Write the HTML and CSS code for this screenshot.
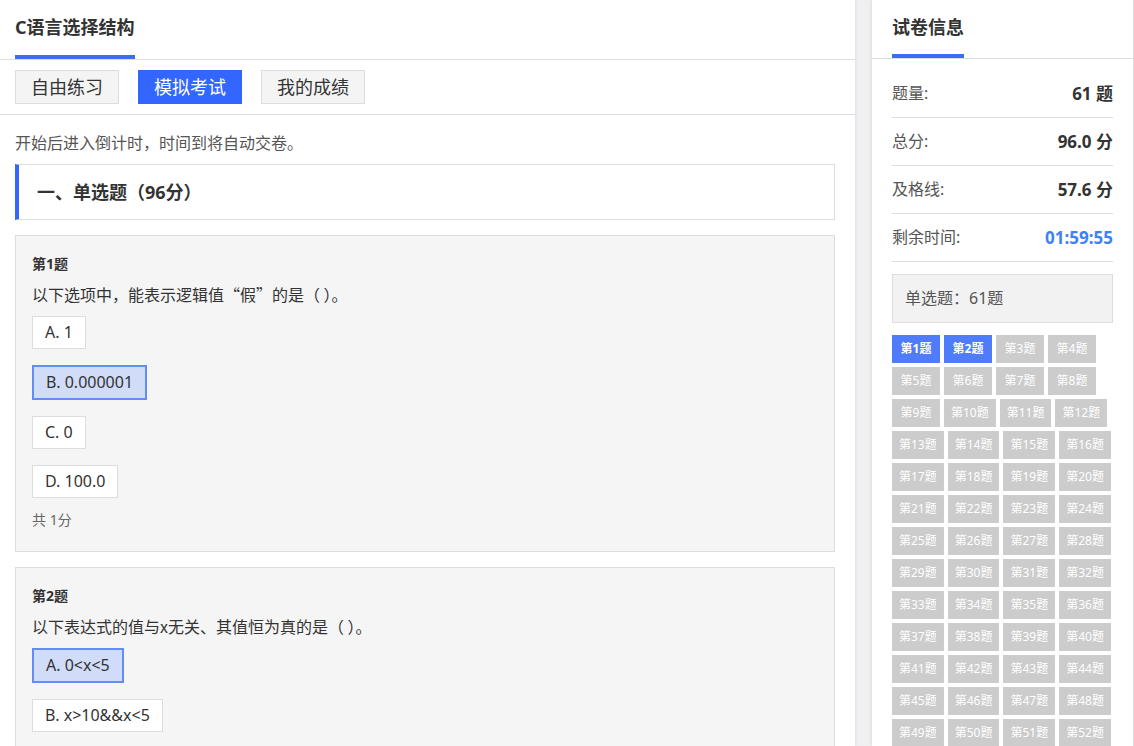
FILE: index.html
```html
<!DOCTYPE html>
<html lang="zh-CN">
<head>
    <meta charset="UTF-8">
    <meta name="viewport" content="width=device-width, initial-scale=1.0">
    <title>模拟考试 - C语言选择结构</title>
    <link rel="stylesheet" href="styles.css">
</head>
<body>

<div class="page">
    <div class="main">
        <div class="main-head"><span class="main-title">C语言选择结构</span></div>

        <div class="tabs">
            <a class="tab">自由练习</a>
            <a class="tab active">模拟考试</a>
            <a class="tab">我的成绩</a>
        </div>

        <div class="content">
            <p class="tip">开始后进入倒计时，时间到将自动交卷。</p>

            <div class="section-title">一、单选题（96分）</div>

            <div class="question">
                <div class="q-no">第1题</div>
                <div class="q-text">以下选项中，能表示逻辑值“假”的是（ ）。</div>
                <div class="opt">A. 1</div>
                <div class="opt selected">B. 0.000001</div>
                <div class="opt">C. 0</div>
                <div class="opt">D. 100.0</div>
                <div class="q-score">共 1分</div>
            </div>

            <div class="question">
                <div class="q-no">第2题</div>
                <div class="q-text">以下表达式的值与x无关、其值恒为真的是（ ）。</div>
                <div class="opt selected">A. 0&lt;x&lt;5</div>
                <div class="opt">B. x&gt;10&amp;&amp;x&lt;5</div>
                <div class="opt">C. x&gt;10||x&lt;5</div>
                <div class="opt">D. x&lt;10&amp;&amp;x&gt;5</div>
                <div class="q-score">共 1分</div>
            </div>
        </div>
    </div>

    <div class="side">
        <div class="side-head"><span class="side-title">试卷信息</span></div>

        <div class="info">
            <div class="info-row"><span>题量:</span><b>61 题</b></div>
            <div class="info-row"><span>总分:</span><b>96.0 分</b></div>
            <div class="info-row"><span>及格线:</span><b>57.6 分</b></div>
            <div class="info-row"><span>剩余时间:</span><b class="time">01:59:55</b></div>
        </div>

        <div class="type-box">单选题：61题</div>

        <div class="nums" id="nums"></div>
    </div>
</div>

<script>
    // 题号按钮，已答的标蓝
    const nums = document.getElementById("nums");
    const answered = [1, 2];
    for (let i = 1; i <= 61; i++) {
        const a = document.createElement("a");
        a.className = answered.includes(i) ? "num done" : "num";
        a.textContent = "第" + i + "题";
        nums.appendChild(a);
    }
</script>

</body>
</html>
```

FILE: styles.css
```css
body { margin: 0; font-family: "Noto Sans", "Noto Sans CJK SC", sans-serif; color: #333; background: #eff0f2; }
a { cursor: pointer; }

.page { display: flex; gap: 17px; height: 100vh; }

/* 左侧题目区 */
.main { width: 855px; flex-shrink: 0; background: #fff; overflow-y: auto; scrollbar-width: none;
    box-shadow: 0 0 4px rgba(0, 0, 0, 0.12); }
.main-head { display: flex; height: 59px; padding: 0 15px; border-bottom: 1px solid #ddd; }
.main-title { line-height: 55px; border-bottom: 4px solid #3a6cf6; font-size: 18px; font-weight: bold; }

.tabs { display: flex; gap: 19px; padding: 10px 15px; border-bottom: 1px solid #ddd; }
.tab { width: 104px; box-sizing: border-box; height: 34px; line-height: 32px; text-align: center; border: 1px solid #ddd;
    background: #f4f4f4; font-size: 18px; }
.tab.active { background: #3366ff; border-color: #3366ff; color: #fff; }

.content { padding: 0 20px 20px 15px; }
.tip { margin: 0; padding-top: 17px; font-family: "Noto Sans CJK SC", sans-serif; font-size: 16px; line-height: 20px; color: #555; }
.section-title { margin-top: 12px; height: 54px; line-height: 54px; padding-left: 18px; border: 1px solid #ddd;
    border-left: 4px solid #3366ff; font-size: 18px; font-weight: bold; }

.question { display: flex; flex-direction: column; align-items: flex-start; margin-top: 15px; padding: 18px 16px 21px;
    background: #f5f5f5; border: 1px solid #ddd; }
.q-no { font-size: 14px; font-weight: bold; line-height: 20px; }
.q-text { margin-top: 10px; font-family: "Noto Sans CJK SC", sans-serif; font-size: 16px; line-height: 20px; }
.opt { margin-top: 16px; padding: 0 12px; line-height: 31px; background: #fff; border: 1px solid #ddd; font-size: 16px; }
.q-text + .opt { margin-top: 12px; }
.opt.selected { background: #d1dcf8; border: 2px solid #628cf8; }
.q-score { margin-top: 12px; font-size: 14px; line-height: 20px; color: #666; }

/* 右侧试卷信息 */
.side { width: 261px; flex-shrink: 0; background: #fff; border-right: 1px solid #ddd; overflow-y: auto; scrollbar-width: none;
    box-shadow: 0 0 4px rgba(0, 0, 0, 0.12); }
.side-head { display: flex; padding: 0 20px; border-bottom: 1px solid #ddd; }
.side-title { line-height: 54px; border-bottom: 4px solid #3a6cf6; font-size: 18px; font-weight: bold; }

.info { padding: 11px 20px 0; }
.info-row { display: flex; justify-content: space-between; height: 47px; line-height: 47px; border-bottom: 1px solid #ddd;
    font-size: 16px; color: #555; }
.info-row b { font-size: 17px; color: #333; }
.info-row .time { color: #3e82f7; }

.type-box { margin: 12px 20px 0; height: 47px; line-height: 47px; padding-left: 12px; background: #f2f2f2;
    border: 1px solid #ddd; font-size: 16px; color: #555; }

.nums { display: flex; flex-wrap: wrap; gap: 4px; padding: 12px 20px 20px; }
.num { min-width: 48px; box-sizing: border-box; height: 28px; line-height: 28px; padding: 0 7px; text-align: center;
    background: #ccc; color: #fff; font-size: 12px; }
.num.done { background: #4f7cfb; font-weight: bold; }
```
